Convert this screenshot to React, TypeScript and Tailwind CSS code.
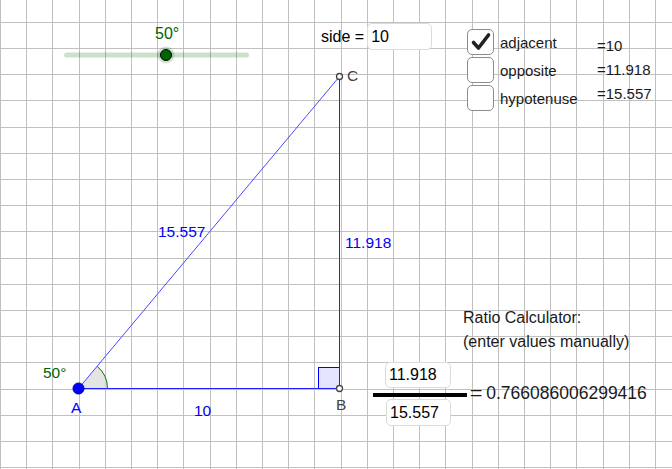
import React from "react";

const UNIT = 26.2;
const OX = 78.5;
const OY = 388.5;

const font = { fontFamily: '"Liberation Sans", Arial, sans-serif' };

function Grid() {
  const xs: number[] = [];
  const ys: number[] = [];
  for (let k = -3; k <= 23; k++) xs.push(Math.round(OX + k * UNIT) + 0.5);
  for (let k = -15; k <= 4; k++) ys.push(Math.round(OY + k * UNIT) + 0.5);
  return (
    <g stroke="#c0c0c0" strokeWidth={1}>
      {xs.map((x) => (
        <line key={"x" + x} x1={x} y1={0} x2={x} y2={469} />
      ))}
      {ys.map((y) => (
        <line key={"y" + y} x1={0} y1={y} x2={672} y2={y} />
      ))}
    </g>
  );
}

function Triangle() {
  const ax = 78.5;
  const ay = 388.5;
  const bx = 339.5;
  const by = 388.5;
  const cx = 339.5;
  const cy = 76.5;
  const r = 29;
  const ex = ax + r * Math.cos((50 * Math.PI) / 180);
  const ey = ay - r * Math.sin((50 * Math.PI) / 180);
  return (
    <g>
      <path d={`M${ax} ${ay} L${ax + r} ${ay} A${r} ${r} 0 0 0 ${ex} ${ey} Z`} fill="#d9d9d9" fillOpacity={0.7} />
      <path d={`M${ax + r} ${ay} A${r} ${r} 0 0 0 ${ex} ${ey}`} fill="none" stroke="#007f00" strokeWidth={1} />
      <rect x={318.5} y={367.5} width={21} height={21} fill="#e4e4ff" stroke="#0000ff" strokeWidth={1} />
      <line x1={ax} y1={ay} x2={bx} y2={by} stroke="#2020ff" strokeWidth={1} />
      <line x1={bx} y1={by} x2={cx} y2={cy} stroke="#2020ff" strokeWidth={1} />
      <line x1={ax} y1={ay} x2={cx} y2={cy} stroke="#4848ff" strokeWidth={1} />
      <circle cx={ax} cy={ay} r={5.5} fill="#0000ff" stroke="#00007a" strokeWidth={1} />
      <circle cx={bx} cy={by} r={3} fill="#ffffff" stroke="#444444" strokeWidth={1.3} />
      <circle cx={cx} cy={cy} r={3} fill="#ffffff" stroke="#444444" strokeWidth={1.3} />
      <g style={font} fontSize={15.5}>
        <text x={71} y={413} fill="#0000ff">A</text>
        <text x={336} y={410} fill="#444444">B</text>
        <text x={347} y={81} fill="#444444">C</text>
        <text x={158} y={236.5} fill="#0000ff">15.557</text>
        <text x={345} y={248} fill="#0000ff">11.918</text>
        <text x={194} y={415.5} fill="#0000ff">10</text>
        <text x={43} y={378} fill="#006400">50°</text>
      </g>
    </g>
  );
}

function Slider() {
  return (
    <g>
      <rect x={64} y={52.5} width={185} height={5} rx={2.5} fill="#006400" fillOpacity={0.2} />
      <circle cx={166} cy={55} r={8.5} fill="#006400" fillOpacity={0.18} />
      <circle cx={166} cy={55} r={5.5} fill="#006400" stroke="#000000" strokeWidth={1} />
      <text x={155} y={39} fill="#006400" fontSize={16} style={font}>
        50°
      </text>
    </g>
  );
}

function Check({ checked }: { checked?: boolean }) {
  return (
    <div className="flex h-[26px] w-[27px] items-center justify-center rounded-[5px] border-[1.5px] border-[#8c8c8c] bg-white">
      {checked && (
        <svg width="22" height="22" viewBox="0 0 22 22">
          <path d="M3.5 11.5 L8.5 17 L18.5 4" fill="none" stroke="#222" strokeWidth={3.6} strokeLinecap="round" strokeLinejoin="round" />
        </svg>
      )}
    </div>
  );
}

const rows = [
  { label: "adjacent", checked: true },
  { label: "opposite", checked: false },
  { label: "hypotenuse", checked: false },
];

const values = [
  { text: "=10", top: 37 },
  { text: "=11.918", top: 61 },
  { text: "=15.557", top: 85 },
];

export default function App() {
  return (
    <div className="relative h-[469px] w-[672px] overflow-hidden bg-white text-black" style={font}>
      <svg className="absolute left-0 top-0" width="672" height="469">
        <Grid />
        <Triangle />
        <Slider />
        <rect x={373} y={393} width={94} height={4} fill="#000000" />
      </svg>

      <div className="absolute left-[321px] top-[23px] flex items-center gap-[3px] text-[16px]">
        <span>side =</span>
        <div className="flex h-[27px] w-[65px] items-center rounded-[5px] border border-[#dcdcdc] bg-white px-[3px]">10</div>
      </div>

      <div className="absolute left-[467px] top-[29px] flex flex-col gap-[2px]">
        {rows.map((r) => (
          <div key={r.label} className="flex h-[26px] items-center gap-[6px]">
            <Check checked={r.checked} />
            <span className="pt-[2px] text-[15px] leading-[26px] text-[#1a1a1a]">{r.label}</span>
          </div>
        ))}
      </div>

      {values.map((v) => (
        <div key={v.text} className="absolute left-[597px] text-[15px] leading-[18px] text-[#1a1a1a]" style={{ top: v.top }}>
          {v.text}
        </div>
      ))}

      <div className="absolute left-[463px] top-[309px] flex flex-col gap-[6px] text-[16px] leading-[18px] text-[#1a1a1a]">
        <span>Ratio Calculator:</span>
        <span>(enter values manually)</span>
      </div>

      <div className="absolute left-[385px] top-[362px] flex h-[26px] w-[66px] items-center rounded-[5px] border border-[#dcdcdc] bg-white px-[3px] text-[16px]">
        11.918
      </div>
      <div className="absolute left-[386px] top-[399px] flex h-[27px] w-[65px] items-center rounded-[5px] border border-[#dcdcdc] bg-white px-[3px] text-[16px]">
        15.557
      </div>

      <div className="absolute left-[471px] top-[382px] flex items-baseline gap-[5px] text-[17.5px] leading-[22px] text-[#1a1a1a]">
        <span className="scale-x-125">=</span>
        <span>0.766086006299416</span>
      </div>
    </div>
  );
}
